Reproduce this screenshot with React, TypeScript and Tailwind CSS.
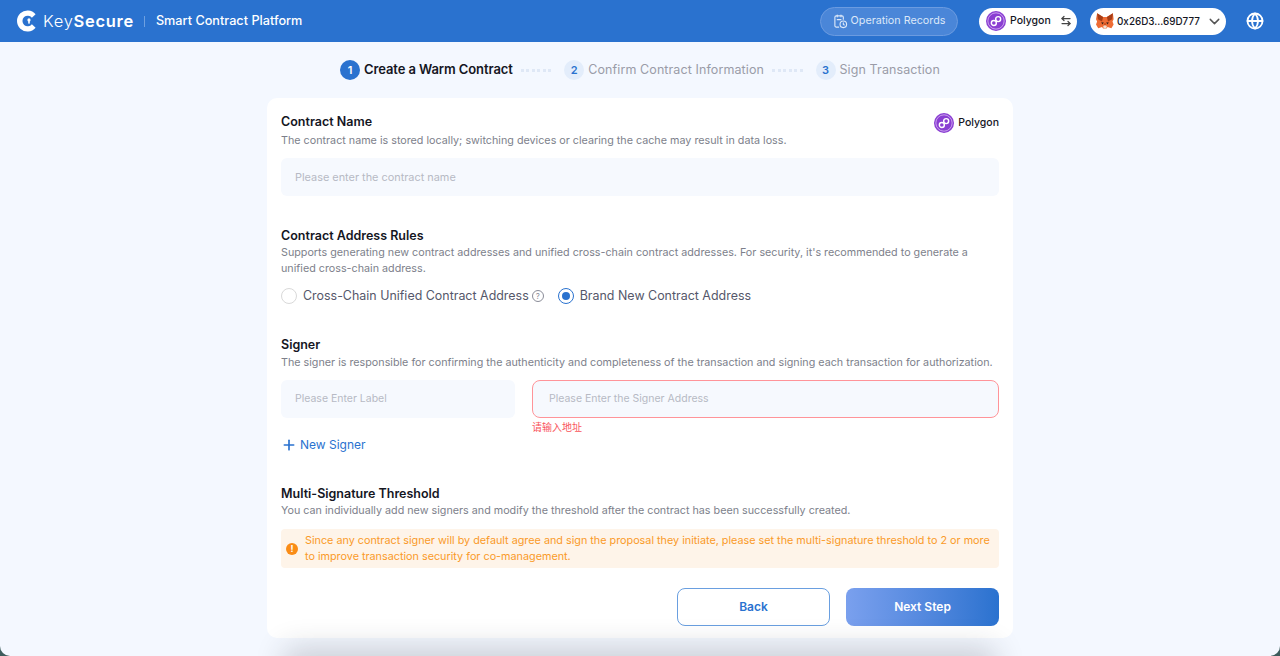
import React from 'react';
import { ArrowLeftRight, ChevronDown, Globe, Plus } from 'lucide-react';

const PolygonBadge = ({ size }: { size: number }) => (
  <svg width={size} height={size} viewBox="0 0 24 24" fill="none" className="shrink-0">
    <circle cx="12" cy="12" r="12" fill="#8a3ed2" />
    <circle cx="12" cy="12" r="9.800" stroke="#d6b4f3" strokeWidth="1" />
    <circle cx="9.400" cy="14.300" r="3" stroke="#fff" strokeWidth="1.700" />
    <circle cx="14.600" cy="9.700" r="3" stroke="#fff" strokeWidth="1.700" />
  </svg>
);

const Fox = () => (
  <svg width="18" height="18" viewBox="0 0 24 24" className="shrink-0">
    <path d="M1.500 1.500l8 5h5l8-5 1 8-1.500 3 1.500 4-3 5-5-1.500-1.500 2h-4.500l-1.500-2-5 1.500-3-5 1.500-4-1.500-3z" fill="#ee6c34" />
    <path d="M1.500 1.500l8 5-1.500 6-5.500-3zM22.500 1.500l-8 5 1.500 6 5.500-3z" fill="#a63d16" />
    <path d="M7 13.500l3.500.5-2 2.500zM17 13.500l-3.500.5 2 2.500z" fill="#37231a" />
    <path d="M9.500 19.500l1.200-2h2.600l1.200 2-1 2h-3z" fill="#f0dfd2" />
    <path d="M10.500 15h3l-.3 2.500h-2.400z" fill="#c94f1d" />
  </svg>
);

const LogoMark = () => (
  <svg width="22" height="22" viewBox="0 0 22 22" className="shrink-0">
    <path d="M18.600 4.300A10.500 10.500 0 1 0 18.600 17.700L14.900 14.300A5.300 5.300 0 1 1 14.900 7.700Z" fill="#fff" />
    <circle cx="12" cy="9.900" r="1.600" fill="#fff" />
    <rect x="11.200" y="10" width="1.600" height="3.600" fill="#fff" />
  </svg>
);

const RecordsIcon = () => (
  <svg width="15" height="15" viewBox="0 0 16 16" fill="none" stroke="#dce8f8" strokeWidth="1.200" className="shrink-0">
    <path d="M6.500 14H3.500A1.500 1.500 0 0 1 2 12.500V3.500A1.500 1.500 0 0 1 3.500 2h6A1.500 1.500 0 0 1 11 3.500V6" />
    <path d="M4.500 1v2M8.500 1v2M4.500 6h4" strokeLinecap="round" />
    <circle cx="11" cy="11" r="3.500" />
    <path d="M11 9.500V11l1 .7" strokeLinecap="round" />
  </svg>
);

const Step = ({ n, label, active }: { n: number; label: string; active?: boolean }) => (
  <div className="flex items-center gap-[4px]">
    <span className={`flex h-[20px] w-[20px] items-center justify-center rounded-full text-[11px] font-semibold ${active ? 'bg-[#2a72cf] text-white' : 'bg-[#e3edfb] text-[#2a72cf]'}`}>{n}</span>
    <span className={active ? 'text-[13px] font-semibold tracking-[-0.1px] text-[#15161f]' : 'text-[12.500px] font-normal tracking-[0.1px] text-[#9a9ca8]'}>{label}</span>
  </div>
);

const Dots = () => (
  <div className="ml-[8px] mr-[13px] flex gap-[2.500px]">
    {[0, 1, 2, 3, 4, 5].map(i => <span key={i} className="h-[3px] w-[3px] bg-[#dfe8f6]" />)}
  </div>
);

const Title = ({ children }: { children: React.ReactNode }) => (
  <h2 className="text-[12.500px] font-semibold leading-[18px] text-[#15161f]">{children}</h2>
);

const Desc = ({ children }: { children: React.ReactNode }) => (
  <p className="text-[10.750px] leading-[16px] text-[#7d7f8b]">{children}</p>
);

const App = () => {
  return <div className="h-[656px] w-[1280px] overflow-hidden bg-[#3d5c5c] font-['Inter','Noto_Sans_CJK_SC',sans-serif]">
      <div className="flex h-full flex-col overflow-hidden rounded-b-[10px] bg-[#f4f8ff]">
        <header className="flex h-[42px] shrink-0 items-center bg-[#2a72cf] pl-[17px] pr-[16px] text-white">
          <LogoMark />
          <span className="ml-[4px] text-[16.500px] font-light tracking-[0.7px]">Key<span className="font-semibold">Secure</span></span>
          <span className="ml-[10px] mr-[11px] h-[11px] w-px bg-[#6ea0e0]" />
          <span className="text-[12.700px] font-medium">Smart Contract Platform</span>
          <div className="ml-auto flex h-[29px] w-[138px] items-center justify-center gap-[3px] rounded-full border border-[#6b9be0] bg-[#4a86d8] text-[10.750px] text-[#dce8f8]">
            <RecordsIcon />
            Operation Records
          </div>
          <div className="ml-[21px] flex h-[27px] w-[98px] items-center rounded-full bg-white pl-[7px] text-[#15161f]">
            <PolygonBadge size={20} />
            <span className="ml-[4px] text-[10.500px] font-medium">Polygon</span>
            <ArrowLeftRight className="ml-[9px] h-[12px] w-[12px] text-[#444]" strokeWidth={2.500} />
          </div>
          <div className="ml-[13px] flex h-[27px] w-[136px] items-center rounded-full bg-white pl-[6px] text-[#15161f]">
            <Fox />
            <span className="ml-[3px] text-[9.900px] font-medium">0x26D3...69D777</span>
            <ChevronDown className="ml-[6px] h-[17px] w-[17px] text-[#555]" />
          </div>
          <Globe className="ml-[20px] h-[18px] w-[18px] text-white" strokeWidth={2.400} />
        </header>

        <div className="flex h-[56px] shrink-0 items-center justify-center">
          <Step n={1} label="Create a Warm Contract" active />
          <Dots />
          <Step n={2} label="Confirm Contract Information" />
          <Dots />
          <Step n={3} label="Sign Transaction" />
        </div>

        <main className="mx-auto h-[540px] w-[746px] shrink-0 rounded-[10px] bg-white px-[14px] pt-[15px]">
          <div className="flex items-start justify-between">
            <Title>Contract Name</Title>
            <div className="flex items-center gap-[4px]">
              <PolygonBadge size={20} />
              <span className="text-[10.500px] font-medium text-[#15161f]">Polygon</span>
            </div>
          </div>
          <Desc>The contract name is stored locally; switching devices or clearing the cache may result in data loss.</Desc>
          <div className="mt-[9px] flex h-[38px] items-center rounded-[6px] bg-[#f6f9fe] px-[14px] text-[10.900px] text-[#b7bac4]">Please enter the contract name</div>

          <div className="mt-[31px]"><Title>Contract Address Rules</Title></div>
          <Desc>Supports generating new contract addresses and unified cross-chain contract addresses. For security, it's recommended to generate a unified cross-chain address.</Desc>
          <div className="mt-[10px] flex h-[18px] items-center text-[12.450px] text-[#55576a]">
            <span className="h-[16px] w-[16px] rounded-full border border-[#d9d9d9]" />
            <span className="ml-[6px]">Cross-Chain Unified Contract Address</span>
            <span className="ml-[3px] flex h-[12px] w-[12px] items-center justify-center rounded-full border border-[#8a8c98] text-[8px] text-[#8a8c98]">?</span>
            <span className="ml-[14px] flex h-[16px] w-[16px] items-center justify-center rounded-full border border-[#2a72cf]"><span className="h-[8px] w-[8px] rounded-full bg-[#2a72cf]" /></span>
            <span className="ml-[6px]">Brand New Contract Address</span>
          </div>

          <div className="mt-[31px]"><Title>Signer</Title></div>
          <div className="mt-px"><Desc>The signer is responsible for confirming the authenticity and completeness of the transaction and signing each transaction for authorization.</Desc></div>
          <div className="mt-[9px] flex gap-[17px]">
            <div className="flex h-[38px] w-[234px] items-center rounded-[6px] bg-[#f6f9fe] px-[14px] text-[10.500px] text-[#b7bac4]">Please Enter Label</div>
            <div className="flex h-[38px] flex-1 items-center rounded-[8px] border-[1.500px] border-[#ff9499] bg-[#f6f9fe] px-[16px] text-[10.500px] text-[#b7bac4]">Please Enter the Signer Address</div>
          </div>
          <div className="ml-[251px] h-[18px] text-[10px] leading-[18px] text-[#f9545b]">请输入地址</div>
          <div className="flex h-[17px] items-center text-[#2a72cf]">
            <Plus className="h-[16px] w-[16px]" strokeWidth={2.500} />
            <span className="ml-[3px] text-[12px]">New Signer</span>
          </div>

          <div className="mt-[32px]"><Title>Multi-Signature Threshold</Title></div>
          <Desc>You can individually add new signers and modify the threshold after the contract has been successfully created.</Desc>
          <div className="mt-[10px] flex h-[39px] items-center gap-[7px] rounded-[4px] bg-[#fef4e9] pl-[5px] pr-[6px] text-[10.800px] leading-[16px] text-[#fa9a28]">
            <span className="flex h-[12px] w-[12px] shrink-0 items-center justify-center rounded-full bg-[#fa8c16] text-[9px] font-bold text-white">!</span>
            <p>Since any contract signer will by default agree and sign the proposal they initiate, please set the multi-signature threshold to 2 or more to improve transaction security for co-management.</p>
          </div>
          <div className="mt-[20px] flex justify-end gap-[16px]">
            <button className="h-[38px] w-[153px] rounded-[8px] border border-[#6a9fe0] bg-white text-[12px] font-semibold text-[#2a72cf]">Back</button>
            <button className="h-[38px] w-[153px] rounded-[8px] bg-gradient-to-r from-[#7aa0ee] to-[#2a72cf] text-[12px] font-semibold text-white">Next Step</button>
          </div>
        </main>
        {/* next card peeking in from below the fold */}
        <div className="mx-auto mt-[22px] h-[40px] w-[686px] shrink-0 shadow-[0_0_30px_12px_rgba(35,40,50,0.2)]" />
      </div>
    </div>;
};

export default App;
